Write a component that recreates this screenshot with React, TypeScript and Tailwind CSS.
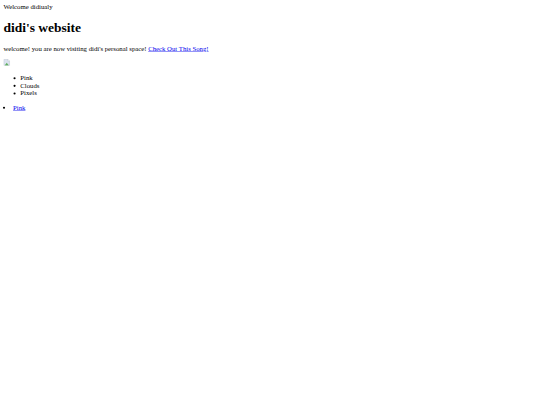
export default function App() {
  return (
    <div className="h-[405px] w-[540px] overflow-hidden bg-white">
      {/* reference is a 1280px page shrunk down, so lay it out at full size and scale it */}
      <div className="w-[1280px] origin-top-left scale-[0.421875] p-2 font-['Liberation_Serif',serif] text-base leading-[18px] text-black">
        <div>Welcome didiualy</div>
        <h1 className="my-[21.44px] text-[32px] leading-[37px] font-bold">didi's website</h1>
        <p className="my-4">
          welcome! you are now visiting didi's personal space!{" "}
          <a href="#" className="text-[#0000ee] underline">Check Out This Song!</a>
        </p>
        <div className="h-5">
          <svg viewBox="0 0 16 16" className="h-4 w-4">
            <path d="M1 1H11L15 5V15H1Z" fill="#dbe3ef" stroke="#b5bcc8" />
            <path d="M3 15L8 9L13 15Z" fill="#5fae5f" />
            <path d="M11 1V5H15" fill="#ffffff" stroke="#b5bcc8" />
          </svg>
        </div>
        <ul className="my-4 list-disc pl-10">
          <li>Pink</li>
          <li>Clouds</li>
          <li>Pixels</li>
        </ul>
        <ul className="my-4 list-disc pl-[15px]">
          <li><a href="#" className="ml-2 text-[#0000ee] underline">Pink</a></li>
        </ul>
      </div>
    </div>
  );
}
